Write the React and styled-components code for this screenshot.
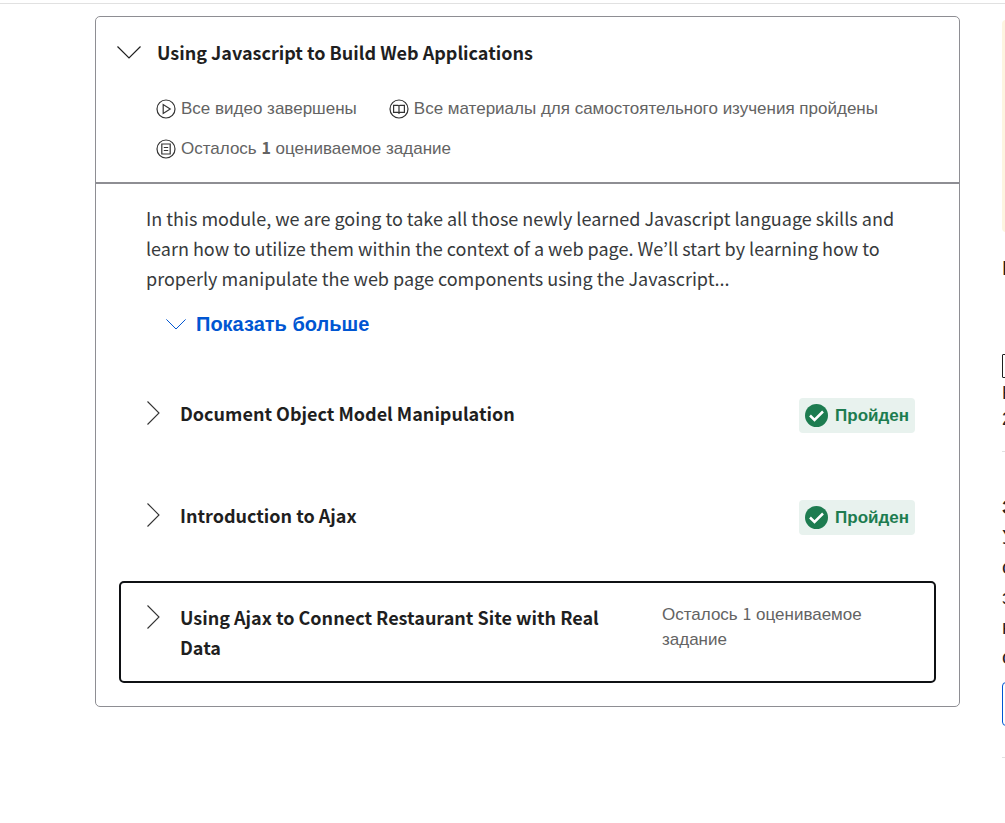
import React from "react";
import styled, { createGlobalStyle } from "styled-components";

const latin = `"Noto Sans CJK KR", "Open Sans", sans-serif`;
const cyrillic = `"Liberation Sans", Arial, sans-serif`;

const GlobalStyle = createGlobalStyle`
  *, *::before, *::after { box-sizing: border-box; }
  body { margin: 0; background: #fff; color: #1f1f1f; font-family: ${cyrillic}; }
  h2, h3, p, ul { margin: 0; padding: 0; }
  button { background: none; border: 0; padding: 0; color: inherit; text-align: left; cursor: pointer; }
`;

const Page = styled.div`
  min-height: 100vh;
  overflow: hidden;
`;

const TopBar = styled.div`
  height: 4px;
  border-bottom: 1px solid #e1e1e1;
`;

const Columns = styled.div`
  display: grid;
  grid-template-columns: minmax(0, 1fr) 300px;
  column-gap: 42px;
  align-items: start;
  margin-right: -297px;
  padding: 12px 0 0 95px;
`;

const Module = styled.section`
  border: 1px solid #8e8e93;
  border-radius: 5px;
`;

const ModuleHeader = styled.header`
  padding: 20px 40px 21px 21px;
  border-bottom: 2px solid #8e8e93;
`;

const ModuleToggle = styled.button`
  display: flex;
  align-items: center;
  gap: 16px;
  font: bold 18px/30px ${latin};
`;

const ModuleTitle = styled.h2`
  font: inherit;
`;

const MetaList = styled.ul`
  display: flex;
  flex-wrap: wrap;
  gap: 16px 32px;
  margin-top: 30px;
  padding-left: 39px;
  list-style: none;
`;

const MetaItem = styled.li`
  display: flex;
  align-items: center;
  gap: 5px;
  color: #636363;
  font-size: 17px;
  line-height: 24px;
`;

const Count = styled.span`
  font-family: ${latin};
  font-size: 16px;
  font-weight: ${(p) => (p.$strong ? "bold" : "normal")};
  line-height: 1;
`;

const ModuleBody = styled.div`
  padding: 19px 23px 23px;
`;

const Description = styled.p`
  padding: 0 27px;
  color: #373a3c;
  font: 18px/30px ${latin};
`;

const ShowMore = styled.button`
  display: flex;
  align-items: center;
  gap: 10px;
  margin: 16px 0 38px 47px;
  color: #0056d2;
  font: bold 20px/30px ${cyrillic};
`;

const Lesson = styled.button`
  display: grid;
  grid-template-columns: 13px minmax(0, 1fr) 253px;
  column-gap: 20px;
  align-items: start;
  align-content: start;
  width: 100%;
  min-height: 102px;
  padding: 19px 19px 19px 26px;
  border: 2px solid ${(p) => (p.$active ? "#0f1114" : "transparent")};
  border-radius: 5px;
`;

const LessonTitle = styled.h3`
  font: bold 18px/30px ${latin};
`;

const ChevronCell = styled.span`
  display: flex;
  align-items: center;
  height: 30px;
`;

const Remaining = styled.span`
  color: #636363;
  font: 17px/25px ${cyrillic};
`;

const Badge = styled.span`
  display: flex;
  align-items: center;
  justify-self: end;
  gap: 7px;
  height: 35px;
  padding: 0 6px;
  border-radius: 4px;
  background: #e8f2ee;
  color: #1d7c50;
  font: bold 17px/24px ${cyrillic};
`;

const Side = styled.aside`
  color: #1f1f1f;
  font-size: 18px;
`;

const Notice = styled.div`
  height: 212px;
  margin: 4px 0 21px;
  border-radius: 4px;
  background: #fdf5e0;
`;

const SideText = styled.p`
  font-size: 20px;
  font-weight: ${(p) => (p.$strong ? "bold" : "normal")};
  line-height: 30px;
`;

const Consent = styled.label`
  display: block;
  padding: 71px 0 19px;
  border-bottom: 1px solid #e1e1e1;
  line-height: 26px;
`;

const Check = styled.input`
  appearance: none;
  display: block;
  width: 24px;
  height: 24px;
  margin: 0 0 2px;
  border: 1px solid #1f1f1f;
  border-radius: 1px;
`;

const ConsentLine = styled.span`
  display: block;
`;

const SideSection = styled.section`
  padding: 40px 0 31px;
  border-bottom: 1px solid #e1e1e1;
`;

const SideButton = styled.button`
  display: block;
  width: 180px;
  height: 44px;
  margin-top: 10px;
  border: 1px solid #0056d2;
  border-radius: 4px;
`;

const ChevronDown = ({ width, height }) => (
  <svg width={width} height={height} viewBox="0 0 24 14" fill="none" stroke="currentColor" strokeWidth="1.2" aria-hidden="true">
    <path d="M.5 1.500 12 13 23.500 1.500" />
  </svg>
);

const ChevronRight = () => (
  <svg width="13" height="24" viewBox="0 0 13 24" fill="none" stroke="#333" strokeWidth="1.1" aria-hidden="true">
    <path d="M.5.5 12 12 .5 23.500" />
  </svg>
);

const glyphs = {
  video: <path d="M7.200 5.600v8.800l7-4.400z" />,
  reading: <path d="M4.600 6.400h4.400l1 .6 1-.6h4.400v7h-4.400l-1 .6-1-.6h-4.400zM10 7v8" />,
  task: <path d="M5.800 5h8.400v10H5.800zM7.800 8.500h4.400M7.800 11.500h4.400" />,
};

const MetaIcon = ({ kind }) => (
  <svg width="20" height="20" viewBox="0 0 20 20" fill="none" stroke="#333" strokeWidth="1.200" aria-hidden="true">
    <circle cx="10" cy="10" r="9" />
    {glyphs[kind]}
  </svg>
);

const Done = () => (
  <Badge>
    <svg width="23" height="23" viewBox="0 0 23 23" aria-hidden="true">
      <circle cx="11.500" cy="11.500" r="11.500" fill="#1d7c50" />
      <path d="M5 11.500 9.500 16 18 7.500" fill="none" stroke="#fff" strokeWidth="2.500" />
    </svg>
    Пройден
  </Badge>
);

const lessons = [
  { title: "Document Object Model Manipulation" },
  { title: "Introduction to Ajax" },
  { title: "Using Ajax to Connect Restaurant Site with Real Data", remaining: 1 },
];

export default function App() {
  return (
    <Page>
      <GlobalStyle />
      <TopBar />
      <Columns>
        <Module>
          <ModuleHeader>
            <ModuleToggle>
              <ChevronDown width={24} height={14} />
              <ModuleTitle>Using Javascript to Build Web Applications</ModuleTitle>
            </ModuleToggle>
            <MetaList>
              <MetaItem><MetaIcon kind="video" />Все видео завершены</MetaItem>
              <MetaItem><MetaIcon kind="reading" />Все материалы для самостоятельного изучения пройдены</MetaItem>
              <MetaItem>
                <MetaIcon kind="task" />
                <span>Осталось <Count $strong>1</Count> оцениваемое задание</span>
              </MetaItem>
            </MetaList>
          </ModuleHeader>
          <ModuleBody>
            <Description>
              In this module, we are going to take all those newly learned Javascript language skills and learn how to
              utilize them within the context of a web page. We’ll start by learning how to properly manipulate the web
              page components using the Javascript...
            </Description>
            <ShowMore>
              <ChevronDown width={20} height={12} />
              Показать больше
            </ShowMore>
            {lessons.map(({ title, remaining }) => (
              <Lesson key={title} $active={Boolean(remaining)}>
                <ChevronCell><ChevronRight /></ChevronCell>
                <LessonTitle>{title}</LessonTitle>
                {remaining ? (
                  <Remaining>Осталось <Count>{remaining}</Count> оцениваемое задание</Remaining>
                ) : (
                  <Done />
                )}
              </Lesson>
            ))}
          </ModuleBody>
        </Module>
        <Side>
          <Notice />
          <SideText>Н</SideText>
          <Consent>
            <Check type="checkbox" />
            <ConsentLine>Н</ConsentLine>
            <ConsentLine>2</ConsentLine>
          </Consent>
          <SideSection>
            <SideText $strong>З</SideText>
            <SideText>У</SideText>
            <SideText>о</SideText>
            <SideText>з</SideText>
            <SideText>н</SideText>
            <SideText>о</SideText>
            <SideButton aria-label="З" />
          </SideSection>
        </Side>
      </Columns>
    </Page>
  );
}
